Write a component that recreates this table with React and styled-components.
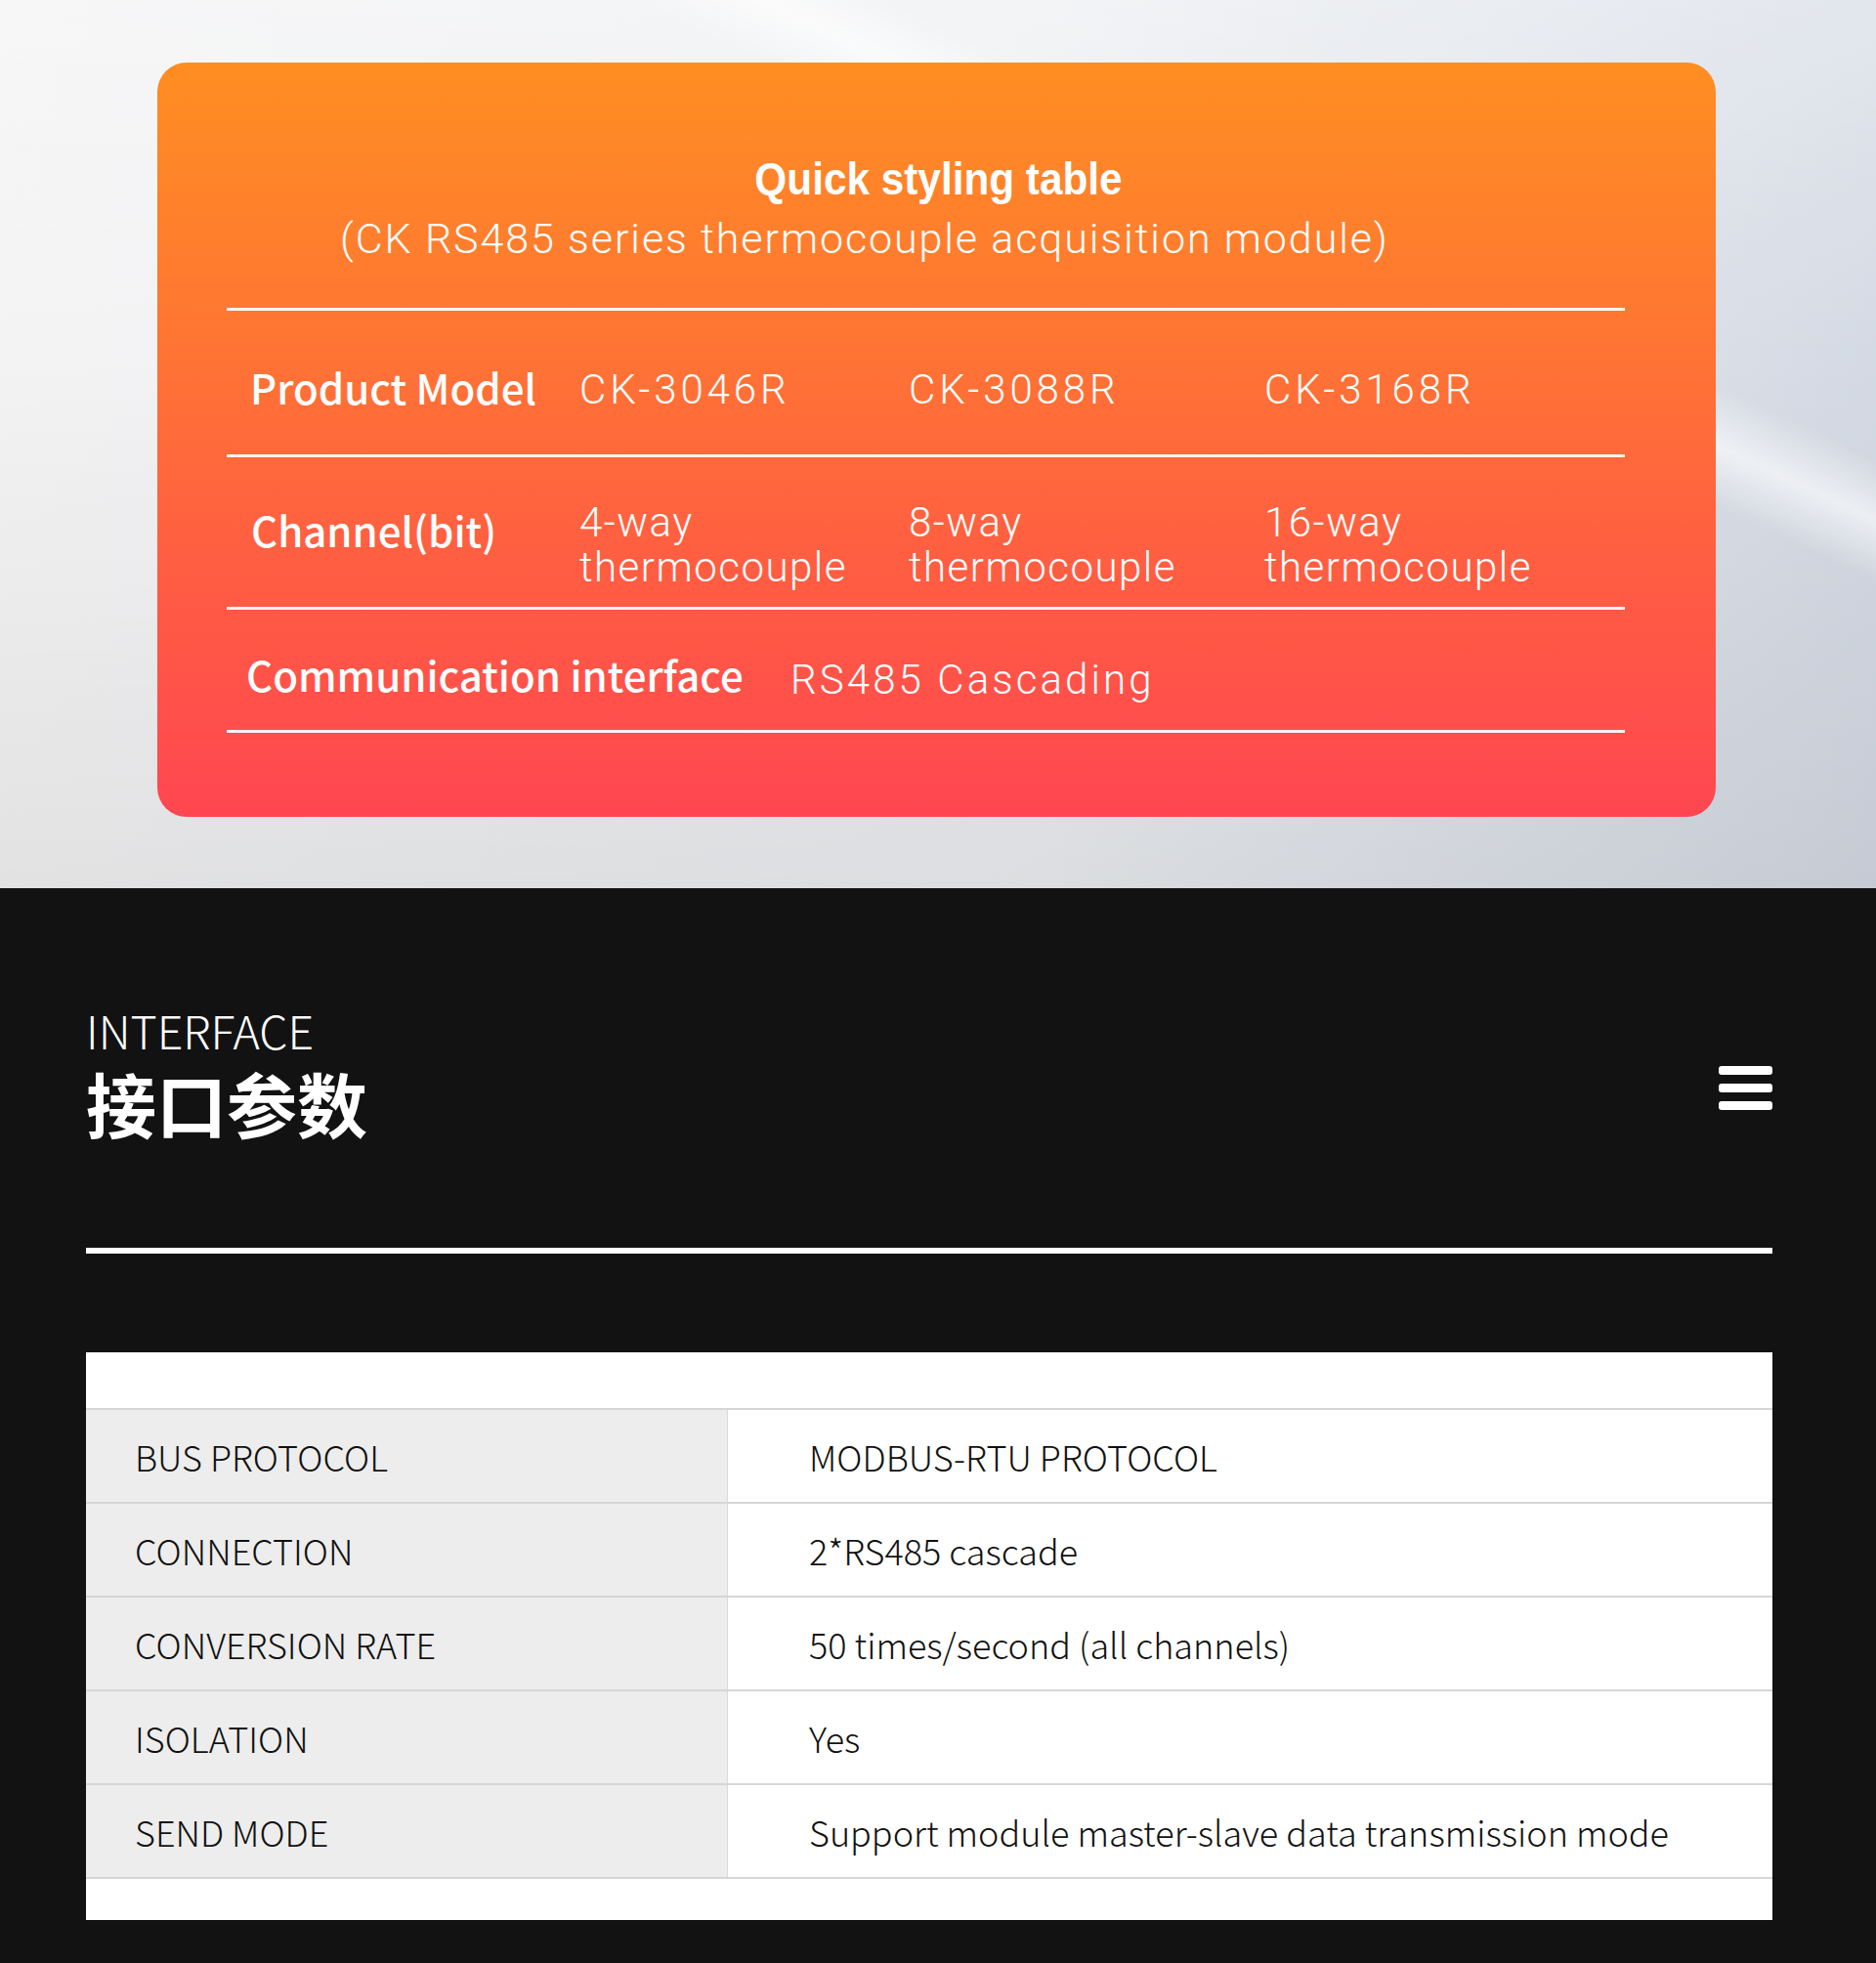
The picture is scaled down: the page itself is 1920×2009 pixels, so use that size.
import React from "react";
import styled, { createGlobalStyle } from "styled-components";

const GlobalStyle = createGlobalStyle`
  * { box-sizing: border-box; }
  body {
    margin: 0;
    background: #121212;
  }
`;

const Page = styled.div`
  width: 1920px;
`;

/* ---------- top: quick styling table ---------- */

const Hero = styled.section`
  height: 909px;
  padding: 64px 0 0 161px;
  background:
    linear-gradient(25deg, transparent 67%, rgba(255,255,255,0.6) 70.5%, transparent 74%),
    linear-gradient(180deg, rgba(255,255,255,0.35) 0%, transparent 40%, rgba(0,0,0,0.07) 100%),
    linear-gradient(90deg, #f3f3f4 0%, #eceef1 55%, #d4dae4 100%);
`;

const Card = styled.div`
  width: 1595px;
  height: 772px;
  border-radius: 30px;
  padding: 0 93px 0 71px;
  display: flex;
  flex-direction: column;
  color: #ffffff;
  background: linear-gradient(180deg, #ff8e22 0%, #ff7a30 30%, #ff6140 62%, #ff4651 100%);
`;

const TitleBlock = styled.div`
  height: 251px;
  padding-top: 93px;
`;

const Title = styled.h2`
  margin: 0;
  padding-left: 25px;
  text-align: center;
  font-family: "Liberation Sans", Arial, sans-serif;
  font-weight: 700;
  font-size: 46px;
  line-height: 52px;

  span {
    display: inline-block;
    transform: scaleX(0.92);
  }
`;

const Subtitle = styled.p`
  margin: 9px 0 0;
  padding-left: 116px;
  font-family: Roboto, "Liberation Sans", sans-serif;
  font-weight: 300;
  font-size: 43px;
  line-height: 52px;
  letter-spacing: 1.9px;
`;

const Rule = styled.div`
  height: 3px;
  background: rgba(255, 255, 255, 0.92);
`;

const Row = styled.div`
  height: ${p => p.h}px;
  padding: ${p => p.pt}px 0 0 24px;
  display: grid;
  grid-template-columns: ${p => p.cols};
  align-items: center;
`;

const Label = styled.div`
  font-family: "Noto Sans CJK SC", "Noto Sans", sans-serif;
  font-weight: 500;
  font-size: 42px;
  line-height: 52px;
  margin: 0 0 6px ${p => p.ml || 0}px;
`;

const Value = styled.div`
  font-family: Roboto, "Liberation Sans", sans-serif;
  font-weight: 300;
  font-size: 42px;
  line-height: 46px;
  letter-spacing: ${p => p.ls || 1.5}px;
  padding-top: ${p => p.pt || 0}px;
`;

const CardBottom = styled.div`
  flex: 1;
`;

/* ---------- bottom: interface parameters ---------- */

const Specs = styled.section`
  background: #121212;
  padding: 117px 106px 45px 88px;
`;

const HeaderRow = styled.div`
  display: flex;
  justify-content: space-between;
  align-items: flex-start;
  height: 151px;
`;

const Heading = styled.div`
  color: #ffffff;
  font-family: "Noto Sans CJK SC", "Noto Sans", sans-serif;
`;

const Eyebrow = styled.div`
  font-weight: 200;
  font-size: 46.5px;
  line-height: 56px;
`;

const BigTitle = styled.h1`
  margin: 4px 0 0;
  font-weight: 700;
  font-size: 72px;
  line-height: 84px;
`;

const MenuIcon = styled.svg`
  display: block;
  margin-top: 65px;
`;

const Divider = styled.div`
  margin-top: 100px;
  height: 6px;
  background: #ffffff;
`;

const Table = styled.div`
  margin-top: 101px;
  background: #ffffff;
  padding: 57px 0 42px;
`;

const SpecRow = styled.div`
  display: grid;
  grid-template-columns: 657px 1fr;
  height: 96px;
  border-top: 2px solid #d6d6d6;
  &:last-child {
    border-bottom: 2px solid #d6d6d6;
    height: 98px;
  }
`;

const Cell = styled.div`
  display: flex;
  align-items: center;
  font-family: "Noto Sans CJK SC", "Noto Sans", sans-serif;
  font-weight: 300;
  font-size: 36px;
  color: #111111;
  background: ${p => (p.head ? "#ededed" : "#ffffff")};
  border-right: ${p => (p.head ? "1px solid #dadada" : "none")};
  padding-left: ${p => (p.head ? 50 : 83)}px;
`;

const specs = [
  ["BUS PROTOCOL", "MODBUS-RTU PROTOCOL"],
  ["CONNECTION", "2*RS485 cascade"],
  ["CONVERSION RATE", "50 times/second (all channels)"],
  ["ISOLATION", "Yes"],
  ["SEND MODE", "Support module master-slave data transmission mode"],
];

const gridCols = "337px 337px 364px 1fr";

export default function App() {
  return (
    <Page>
      <GlobalStyle />
      <Hero>
        <Card>
          <TitleBlock>
            <Title><span>Quick styling table</span></Title>
            <Subtitle>(CK RS485 series thermocouple acquisition module)</Subtitle>
          </TitleBlock>
          <Rule />
          <Row h={147} pt={14} cols={gridCols}>
            <Label>Product Model</Label>
            <Value ls={3.9}>CK-3046R</Value>
            <Value ls={3.9}>CK-3088R</Value>
            <Value ls={3.9}>CK-3168R</Value>
          </Row>
          <Rule />
          <Row h={153} pt={0} cols={gridCols}>
            <Label ml={1}>Channel(bit)</Label>
            <Value pt={26}>4-way<br />thermocouple</Value>
            <Value pt={26}>8-way<br />thermocouple</Value>
            <Value pt={26}>16-way<br />thermocouple</Value>
          </Row>
          <Rule />
          <Row h={123} pt={15} cols="553px 1fr">
            <Label ml={-4}>Communication interface</Label>
            <Value pt={5} ls={3.1}>RS485 Cascading</Value>
          </Row>
          <Rule />
          <CardBottom />
        </Card>
      </Hero>

      <Specs>
        <HeaderRow>
          <Heading>
            <Eyebrow>INTERFACE</Eyebrow>
            <BigTitle>接口参数</BigTitle>
          </Heading>
          <MenuIcon width="55" height="45" viewBox="0 0 55 45">
            <rect x="0" y="0" width="55" height="9" rx="3" fill="#ffffff" />
            <rect x="0" y="18" width="55" height="9" rx="3" fill="#ffffff" />
            <rect x="0" y="36" width="55" height="9" rx="3" fill="#ffffff" />
          </MenuIcon>
        </HeaderRow>
        <Divider />
        <Table>
          {specs.map(([k, v]) => (
            <SpecRow key={k}>
              <Cell head>{k}</Cell>
              <Cell>{v}</Cell>
            </SpecRow>
          ))}
        </Table>
      </Specs>
    </Page>
  );
}
